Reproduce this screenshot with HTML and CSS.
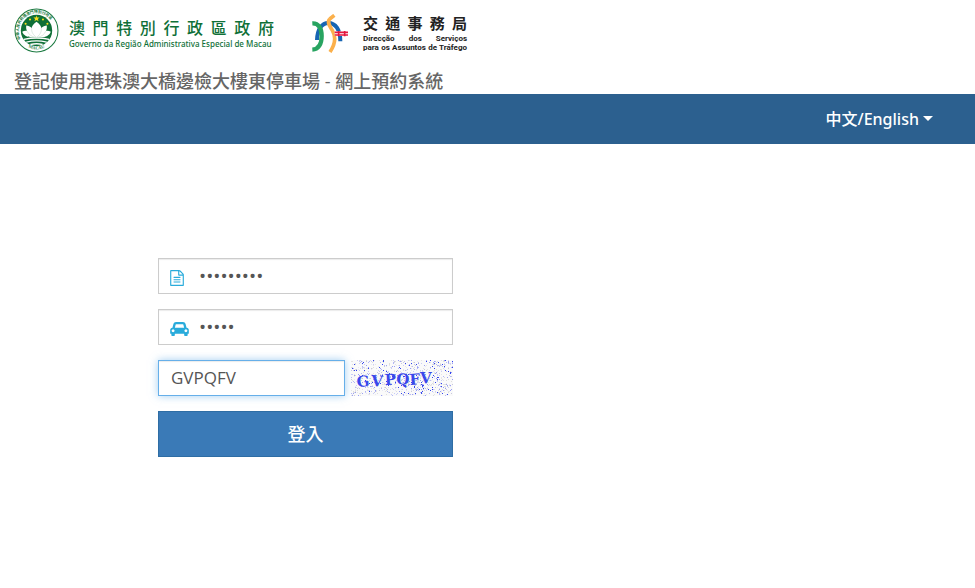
FILE: index.html
```
<!DOCTYPE html>
<html lang="zh-Hant">
<head>
    <meta charset="UTF-8">
    <meta name="viewport" content="width=device-width, initial-scale=1.0">
    <title>網上預約系統</title>
    <link rel="stylesheet" href="styles.css">
</head>
<body>

<header class="header">
    <div class="logos">
        <a href="#" class="logo">
            <svg class="emblem" viewBox="0 0 132 132" aria-hidden="true">
                <defs>
                    <path id="ringTop" d="M20 91A52 52 0 1 1 112 91"/>
                    <path id="ringBottom" d="M20 98A57 57 0 0 0 112 98"/>
                </defs>
                <circle cx="66" cy="66" r="63" fill="#fff" stroke="#1b7a41" stroke-width="3"/>
                <circle cx="66" cy="66" r="46" fill="#0f7038"/>
                <text class="ring-text"><textPath href="#ringTop">中華人民共和國澳門特別行政區</textPath></text>
                <text class="ring-text macau" text-anchor="middle"><textPath href="#ringBottom" startOffset="50%">MACAU</textPath></text>
                <g fill="#f8df1c">
                    <path d="M66 22l2 6h7l-5 4 2 7-6-4-6 4 2-7-5-4h7z"/>
                    <circle cx="47" cy="34" r="3"/>
                    <circle cx="85" cy="34" r="3"/>
                    <circle cx="34" cy="46" r="3"/>
                    <circle cx="98" cy="46" r="3"/>
                </g>
                <path fill="#fff" d="M66 40C76 47 80 54 80 59C84 54 91 51 96 51C97 57 96 63 94 67C99 66 104 67 108 70C104 81 93 86 80 86H52C39 86 28 81 24 70C28 67 33 66 38 67C36 63 35 57 36 51C41 51 48 54 52 59C52 54 56 47 66 40Z"/>
                <path fill="none" stroke="#9cc4ab" stroke-width="1" d="M52 59C50 70 57 80 66 86C75 80 82 70 80 59M38 67C43 78 52 84 62 86M94 67C89 78 80 84 70 86"/>
                <path fill="none" stroke="#fff" stroke-width="4" d="M29 92Q66 84 103 92M36 100Q66 93 96 100M48 107Q66 103 84 107"/>
            </svg>
            <span class="gov-name">
                <span class="gov-zh">澳 門 特 別 行 政 區 政 府</span>
                <span class="gov-pt">Governo da Região Administrativa Especial de Macau</span>
            </span>
        </a>
        <a href="#" class="logo">
            <svg class="dsat" viewBox="0 0 114 120" aria-hidden="true">
                <g fill="none" stroke-width="12">
                    <path stroke="#1765b3" d="M15 78C16 45 30 27 49 27C70 27 85 46 85 82"/>
                    <path stroke="#fbb04b" stroke-width="11" d="M67 4L53 15M53 15C44 26 54 37 61 49C72 68 69 92 54 114"/>
                    <path stroke="#28a461" stroke-width="13" d="M1 28C20 27 29 43 29 66C29 91 19 106 1 107"/>
                </g>
                <path stroke="#fff" stroke-width="14" d="M68 59H108"/>
                <path fill="none" stroke="#e5173f" stroke-width="5" d="M68 55H108M68 63H108M80 51V67M98 51V67"/>
            </svg>
            <span class="dsat-name">
                <span class="dsat-zh">交 通 事 務 局</span>
                <span class="dsat-pt">Direcção dos Serviços</span>
                <span class="dsat-pt">para os Assuntos de Tráfego</span>
            </span>
        </a>
    </div>
    <h1 class="title">登記使用港珠澳大橋邊檢大樓東停車場 - 網上預約系統</h1>
</header>

<nav class="navbar">
    <button type="button" class="lang" aria-haspopup="true">中文/English<span class="caret"></span></button>
</nav>

<main class="content">
    <form class="login-form">
        <div class="field">
            <label for="docNo" aria-label="證件編號">
                <svg class="icon-file" viewBox="0 0 1536 1792" aria-hidden="true"><path d="M1468 380q28 28 48 76t20 88v1152q0 40-28 68t-68 28h-1344q-40 0-68-28t-28-68v-1600q0-40 28-68t68-28h896q40 0 88 20t76 48zm-444-244v376h376q-10-29-22-41l-313-313q-12-12-41-22zm384 1528v-1024h-416q-40 0-68-28t-28-68v-416h-768v1536h1280zm-1024-864q0-14 9-23t23-9h704q14 0 23 9t9 23v64q0 14-9 23t-23 9h-704q-14 0-23-9t-9-23v-64zm736 224q14 0 23 9t9 23v64q0 14-9 23t-23 9h-704q-14 0-23-9t-9-23v-64q0-14 9-23t23-9h704zm0 256q14 0 23 9t9 23v64q0 14-9 23t-23 9h-704q-14 0-23-9t-9-23v-64q0-14 9-23t23-9h704z"/></svg>
            </label>
            <input type="password" id="docNo" value="123456789">
        </div>
        <div class="field">
            <label for="plateNo" aria-label="車牌">
                <svg class="icon-car" viewBox="0 128 2048 1536" aria-hidden="true"><path d="M480 1088q0-66-47-113t-113-47-113 47-47 113 47 113 113 47 113-47 47-113zm36-320h1016l-89-357q-2-8-14-17.5t-21-9.5h-768q-9 0-21 9.5t-14 17.5zm1372 320q0-66-47-113t-113-47-113 47-47 113 47 113 113 47 113-47 47-113zm160-96v384q0 14-9 23t-23 9h-96v128q0 80-56 136t-136 56-136-56-56-136v-128h-1024v128q0 80-56 136t-136 56-136-56-56-136v-128h-96q-14 0-23-9t-9-23v-384q0-93 65.5-158.5t158.5-65.5h28l105-419q23-94 104-157.5t179-63.5h768q98 0 179 63.5t104 157.5l105 419h28q93 0 158.5 65.5t65.5 158.5z"/></svg>
            </label>
            <input type="password" id="plateNo" value="12345">
        </div>
        <div class="captcha-row">
            <input type="text" id="captcha" class="captcha-input" value="GVPQFV" aria-label="驗證碼">
            <svg class="captcha" viewBox="0 0 102 36">
                <g id="noise"></g>
                <text class="captcha-text" x="6 20 34 45 59 69" y="27 26 25 24 25 23" rotate="-4 3 -3 4 -5 0">GVPQFV</text>
            </svg>
        </div>
        <button type="submit" class="btn-login">登入</button>
    </form>
</main>

<script src="script.js"></script>
</body>
</html>
```

FILE: styles.css
```
/* Global Styles */
* {
    box-sizing: border-box;
}

body {
    margin: 0;
    background: #fff;
    color: #555;
    font-family: "Open Sans", "Noto Sans CJK TC", sans-serif;
    font-size: 16px;
}

/* Header */
.header {
    padding: 8px 14px 0;
}

.logos {
    display: flex;
    gap: 38px;
    height: 60px;
}

.logo {
    display: flex;
    align-items: flex-start;
    text-decoration: none;
}

.emblem {
    width: 45px;
    height: 45px;
    margin-right: 10px;
}

.ring-text {
    fill: #1b7a41;
    font: 700 11px "Noto Sans CJK TC", sans-serif;
}

.macau {
    font: 700 13px "Liberation Serif", serif;
}

.gov-name,
.dsat-name {
    display: flex;
    flex-direction: column;
    white-space: nowrap;
}

.gov-name {
    width: 205px;
    padding-top: 8px;
    color: #0f7038;
}

.gov-zh,
.dsat-zh,
.dsat-pt {
    text-align: justify;
    text-align-last: justify;
}

.gov-zh {
    font-size: 16px;
    font-weight: 500;
    line-height: 24px;
}

.gov-pt {
    font-family: "Noto Sans", sans-serif;
    font-size: 8px;
    font-weight: 500;
    line-height: 8px;
}

.dsat {
    width: 38px;
    height: 40px;
    margin: 6px 13px 0 0;
}

.dsat-name {
    width: 104px;
    padding-top: 5px;
    color: #222;
}

.dsat-zh {
    font-size: 15px;
    font-weight: 700;
    line-height: 21px;
}

.dsat-pt {
    font-family: Roboto, sans-serif;
    font-size: 8px;
    font-weight: 700;
    line-height: 9px;
}

.title {
    margin: 0;
    color: #666;
    font-size: 18px;
    font-weight: 500;
    line-height: 26px;
}

/* Navigation Bar */
.navbar {
    display: flex;
    justify-content: flex-end;
    height: 50px;
    padding: 0 42px 2px;
    background: #2c608f;
}

.lang {
    display: flex;
    align-items: center;
    gap: 4px;
    padding: 0;
    border: 0;
    background: none;
    color: #fff;
    font: 500 16px "Noto Sans", "Noto Sans CJK TC", sans-serif;
    cursor: pointer;
}

.caret {
    border-top: 5px solid #fff;
    border-left: 5px solid transparent;
    border-right: 5px solid transparent;
}

/* Login Form */
.content {
    padding: 114px 16% 0;
}

.login-form {
    display: flex;
    flex-direction: column;
    gap: 15px;
    max-width: 295px;
    margin-left: 2px;
}

.field,
.captcha-input {
    height: 36px;
    border: 1px solid #ccc;
    background: #fff;
    box-shadow: inset 0 1px 1px rgba(0, 0, 0, 0.08);
}

.field {
    display: flex;
    align-items: center;
    padding-left: 11px;
}

.field label {
    display: flex;
    width: 29px;
    padding-top: 4px;
}

.field svg {
    fill: #29abdb;
}

.icon-file {
    width: 14px;
    height: 16px;
}

.icon-car {
    width: 19px;
    height: 14px;
}

.field input {
    flex: 1;
    min-width: 0;
    padding: 0;
    border: 0;
    outline: none;
    background: none;
    color: #555;
    font: 19px "Open Sans", sans-serif;
}

.captcha-row {
    display: flex;
    gap: 6px;
}

.captcha-input {
    flex: 1;
    min-width: 0;
    padding: 0 12px 2px;
    border-color: #66afe9;
    outline: none;
    box-shadow: inset 0 1px 1px rgba(0, 0, 0, 0.08), 0 0 8px rgba(102, 175, 233, 0.6);
    color: #555;
    font: 17px "Open Sans", sans-serif;
}

.captcha {
    width: 102px;
    height: 36px;
    background: #fafafa;
}

.captcha-text {
    fill: #3a48ea;
    font: 700 15px "DejaVu Serif", serif;
}

.btn-login {
    height: 46px;
    padding: 0 0 2px;
    border: 1px solid #2e6da4;
    background: #3a7ab7;
    color: #fff;
    font: 500 18px "Noto Sans CJK TC", sans-serif;
    cursor: pointer;
}
```

FILE: script.js
```
// Scatter dots behind the captcha letters
const noise = document.getElementById('noise');
const colors = ['#3344ee', '#9aa0f4', '#b4b8f6', '#c9ccf8', '#c8c8dc', '#dddddd', '#e2e2e2', '#e6e6e6', '#e8e8f4'];
let seed = 7;

function random() {
    seed = (seed * 16807) % 2147483647;
    return seed / 2147483647;
}

for (let i = 0; i < 900; i++) {
    const dot = document.createElementNS('http://www.w3.org/2000/svg', 'rect');
    dot.setAttribute('x', Math.floor(random() * 102));
    dot.setAttribute('y', Math.floor(random() * 36));
    dot.setAttribute('width', 1);
    dot.setAttribute('height', 1);
    dot.setAttribute('fill', colors[Math.floor(random() * colors.length)]);
    noise.appendChild(dot);
}
```
